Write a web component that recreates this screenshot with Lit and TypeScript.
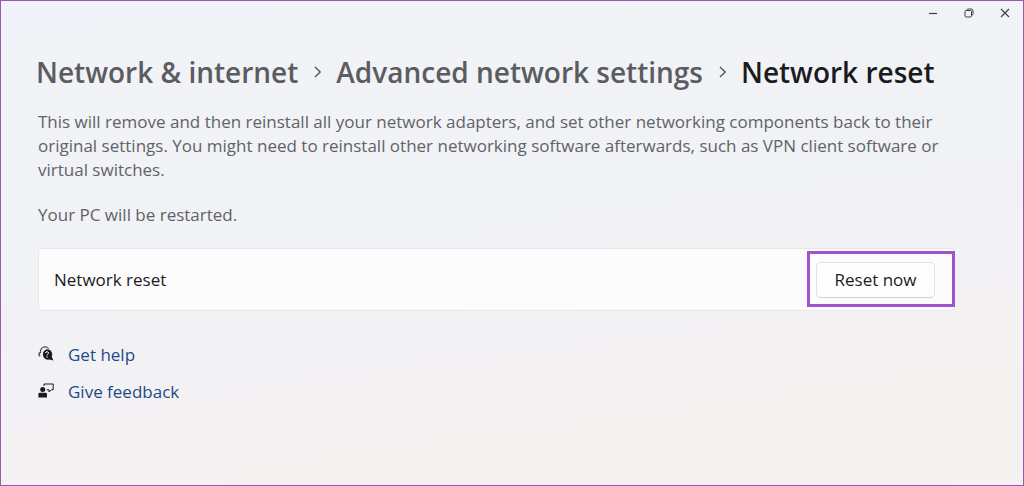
import { LitElement, html, css, svg } from "lit";
import { customElement } from "lit/decorators.js";

const chevron = svg`<path d="M1 1 6.2 6 1 11" fill="none" stroke="currentColor" stroke-width="1.4"/>`;

@customElement("app-root")
export class AppRoot extends LitElement {
  static styles = css`
    :host {
      display: flex;
      flex-direction: column;
      box-sizing: border-box;
      min-height: 100vh;
      border: 1px solid #9d55b8;
      background: linear-gradient(172deg, #f0f3f7 0%, #f1f2f6 46%, #f3f1f3 68%, #f4f1f1 80%, #f3f2f0 100%);
      color: #1b1b1d;
      font: 17px/24px "Open Sans", "Noto Sans", sans-serif;
    }
    * { box-sizing: border-box; }
    .titlebar { display: flex; justify-content: flex-end; height: 24px; }
    .caption {
      display: grid;
      place-items: center;
      width: 36px;
      padding: 0;
      border: 0;
      background: none;
      color: #3c3c40;
    }
    svg { display: block; }
    main { padding: 27px 68px 24px 37px; }
    .crumbs {
      display: flex;
      align-items: center;
      margin: 0 0 0 -2px;
      padding: 0;
      list-style: none;
      font-size: 28px;
      line-height: 40px;
      font-weight: 600;
      white-space: nowrap;
    }
    .crumbs li { display: flex; align-items: center; }
    .crumbs a { color: #5b5c5f; text-decoration: none; }
    .crumbs h1 { margin: 0; font: inherit; }
    .sep { margin: 0 14px 0 16px; color: #55565a; }
    .info { margin: 0; color: #616266; }
    .first { margin-top: 18px; }
    .info + .info { margin-top: 21px; }
    .card {
      display: flex;
      align-items: center;
      justify-content: space-between;
      height: 63px;
      margin-top: 21px;
      padding-left: 15px;
      border: 1px solid #e6e7ea;
      border-radius: 4px;
      background: #fcfcfd;
    }
    .highlight {
      flex: none;
      padding: 8px 17px 6px 6px;
      margin: 0 -1px 2px 0;
      border: 3px solid #a052cf;
    }
    .reset {
      display: block;
      width: 119px;
      height: 36px;
      padding: 0;
      border: 1px solid #e3e3e5;
      border-bottom-color: #d2d2d4;
      border-radius: 5px;
      background: #fefefe;
      color: inherit;
      font: inherit;
      white-space: nowrap;
    }
    .links { display: grid; gap: 13px; justify-items: start; margin-top: 32px; }
    .links a {
      display: flex;
      align-items: center;
      gap: 14px;
      color: #1d4b87;
      text-decoration: none;
    }
    .links svg { margin-bottom: 2px; color: #1b1b1d; }
  `;

  private separator() {
    return html`<svg class="sep" width="8" height="12" viewBox="0 0 8 12" aria-hidden="true">${chevron}</svg>`;
  }

  render() {
    return html`
      <header class="titlebar">
        <button class="caption" aria-label="Minimize">
          <svg width="10" height="10" viewBox="0 0 10 10"><path d="M1 5.5h8" stroke="currentColor" stroke-width="1.2"/></svg>
        </button>
        <button class="caption" aria-label="Restore">
          <svg width="10" height="10" viewBox="0 0 10 10" fill="none" stroke="currentColor">
            <rect x="1" y="2.5" width="6.5" height="6.5" rx="1.2"/>
            <path d="M2.8 1.8Q3.2 1 4.2 1H7Q9 1 9 3v2.8Q9 7 8.2 7.3"/>
          </svg>
        </button>
        <button class="caption" aria-label="Close">
          <svg width="10" height="10" viewBox="0 0 10 10"><path d="m1 1 8 8M9 1 1 9" stroke="currentColor" stroke-width="1.1"/></svg>
        </button>
      </header>
      <main>
        <nav aria-label="Breadcrumb">
          <ol class="crumbs">
            <li><a href="#network">Network &amp; internet</a>${this.separator()}</li>
            <li><a href="#advanced">Advanced network settings</a>${this.separator()}</li>
            <li><h1>Network reset</h1></li>
          </ol>
        </nav>
        <p class="info first">This will remove and then reinstall all your network adapters, and set other networking components back to their original settings. You might need to reinstall other networking software afterwards, such as VPN client software or virtual switches.</p>
        <p class="info">Your PC will be restarted.</p>
        <section class="card">
          <span id="reset-label">Network reset</span>
          <div class="highlight"><button class="reset" aria-describedby="reset-label">Reset now</button></div>
        </section>
        <nav class="links" aria-label="Support">
          <a href="#help">
            <svg width="16" height="16" viewBox="0 0 16 16" aria-hidden="true">
              <path d="M2.4 9.8H1V6.9h1.4V5.4A4.7 4.7 0 0 1 10.6 2.4" fill="none" stroke="currentColor" stroke-width="1"/>
              <path d="M9 3.2a5.2 5.2 0 0 1 4.7 7.4l1.7 4-4-1A5.2 5.2 0 1 1 9 3.2Z" fill="currentColor"/>
              <path d="M7.5 7.1q.1-1.4 1.5-1.4t1.5 1.3q0 .8-.8 1.3-.7.5-.7 1.2" fill="none" stroke="#f3f1f4" stroke-width="1"/>
              <circle cx="9" cy="11" r=".7" fill="#f3f1f4"/>
            </svg>
            Get help
          </a>
          <a href="#feedback">
            <svg width="16" height="16" viewBox="0 0 16 16" aria-hidden="true">
              <circle cx="4.7" cy="6.6" r="2.5" fill="currentColor"/>
              <path d="M.4 11.2Q.4 9.8 1.8 9.8h5.8Q9 9.8 9 11.2v3.4H.4Z" fill="currentColor"/>
              <path d="M6 3V1h9.2v5.8h-1.8l-2.4 2.2V6.8H8.6" fill="none" stroke="currentColor" stroke-width="1"/>
            </svg>
            Give feedback
          </a>
        </nav>
      </main>
    `;
  }
}
